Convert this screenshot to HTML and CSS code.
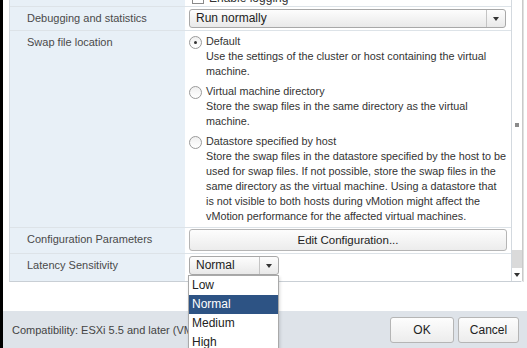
FILE: index.html
```html
<!DOCTYPE html>
<html lang="en">
  <head>
    <meta charset="UTF-8" />
    <meta name="viewport" content="width=device-width, initial-scale=1.0" />
    <title>VM Options</title>
    <link rel="stylesheet" href="styles.css">
  </head>
  <body>
    <div class="dialog">
      <div class="content">
        <div class="scroller">
          <div class="grid">
            <div class="label"></div>
            <div class="value">
              <label class="check"><span class="box"></span>Enable logging</label>
            </div>

            <div class="label">Debugging and statistics</div>
            <div class="value">
              <div class="select wide">
                <span class="select-text">Run normally</span>
                <span class="select-arrow"></span>
              </div>
            </div>

            <div class="label">Swap file location</div>
            <div class="value options">
              <div class="option">
                <span class="radio checked"></span>
                <div class="option-text">
                  <div>Default</div>
                  <div>Use the settings of the cluster or host containing the virtual machine.</div>
                </div>
              </div>
              <div class="option">
                <span class="radio"></span>
                <div class="option-text">
                  <div>Virtual machine directory</div>
                  <div>Store the swap files in the same directory as the virtual machine.</div>
                </div>
              </div>
              <div class="option">
                <span class="radio"></span>
                <div class="option-text">
                  <div>Datastore specified by host</div>
                  <div>Store the swap files in the datastore specified by the host to be used for swap files. If not possible, store the swap files in the same directory as the virtual machine. Using a datastore that<br>is not visible to both hosts during vMotion might affect the vMotion performance for the affected virtual machines.</div>
                </div>
              </div>
            </div>

            <div class="label">Configuration Parameters</div>
            <div class="value tight">
              <button class="btn wide">Edit Configuration...</button>
            </div>

            <div class="label">Latency Sensitivity</div>
            <div class="value">
              <div class="latency">
                <div class="select small">
                  <span class="select-text">Normal</span>
                  <span class="select-arrow"></span>
                </div>
                <ul class="menu">
                  <li>Low</li>
                  <li class="selected">Normal</li>
                  <li>Medium</li>
                  <li>High</li>
                </ul>
              </div>
            </div>
          </div>
          <div class="scrollbar">
            <div class="thumb"><span class="grip"></span></div>
            <div class="track"></div>
            <div class="down"></div>
          </div>
        </div>
        <div class="edge"></div>
      </div>
      <div class="footer">
        <span class="compat">Compatibility: ESXi 5.5 and later (VM version 10)</span>
        <div class="actions">
          <button class="btn action">OK</button>
          <button class="btn action">Cancel</button>
        </div>
      </div>
    </div>
  </body>
</html>
```

FILE: styles.css
```css
body {
  margin: 0;
  background: #fff;
  font-family: "Liberation Sans", Arial, sans-serif;
  font-size: 11px;
  color: #333;
  overflow: hidden;
}

.dialog {
  display: flex;
  flex-direction: column;
  height: 348px;
  border-left: 3px solid #000;
}

.content {
  display: flex;
  height: 311px;
  padding-left: 6px;
  box-sizing: border-box;
  align-items: flex-start;
}

.scroller {
  display: flex;
  width: 512px;
  height: 282px;
  border-left: 1px solid #d3d9df;
  border-bottom: 1px solid #c9cfd5;
  box-sizing: border-box;
  position: relative;
  z-index: 5;
}

.grid {
  flex: 1;
  display: grid;
  grid-template-columns: 175px 1fr;
  grid-template-rows: 22px 24px 197px 26px 27px;
  align-self: flex-start;
  margin-top: -15px;
  border-right: 1px solid #d3d9df;
}

.label {
  background: #e8f0f7;
  padding: 5px 0 0 17px;
  color: #4a4a4a;
  border-bottom: 1px solid #dde3e8;
}

.value {
  padding: 2px 4px;
  border-bottom: 1px solid #dde3e8;
}

.value.tight {
  padding-top: 1px;
}

.grid > :nth-last-child(-n+2) {
  border-bottom: none;
}

.check {
  display: flex;
  align-items: center;
  gap: 5px;
  padding: 4px 0 0 3px;
  font-size: 12px;
}

.check .box {
  width: 10px;
  height: 10px;
  border: 1px solid #8a8a8a;
  background: #fff;
}

.select {
  display: flex;
  height: 19px;
  border: 1px solid #a8a8a8;
  border-radius: 3px;
  background: linear-gradient(#fdfdfd, #e9e9e9);
  box-sizing: border-box;
  color: #222;
}

.select.wide {
  width: 317px;
}

.select.small {
  width: 90px;
}

.select-text {
  flex: 1;
  padding-left: 6px;
  line-height: 17px;
  font-size: 12px;
}

.select-arrow {
  width: 18px;
  border-left: 1px solid #c4c4c4;
  display: flex;
  align-items: center;
  justify-content: center;
}

.select-arrow::before {
  content: "";
  border-left: 3px solid transparent;
  border-right: 3px solid transparent;
  border-top: 4px solid #333;
}

.options {
  display: flex;
  flex-direction: column;
  gap: 5px;
  padding: 3px 0 0 4px;
}

.option {
  display: flex;
  gap: 4px;
}

.option-text {
  flex: none;
  line-height: 15px;
  font-size: 10.8px;
  width: 303px;
}

.radio {
  flex: none;
  width: 11px;
  height: 11px;
  margin-top: 2px;
  border: 1px solid #9a9a9a;
  border-radius: 50%;
  background: linear-gradient(#f0f0f0, #fff);
  display: flex;
  align-items: center;
  justify-content: center;
}

.radio.checked::before {
  content: "";
  width: 3px;
  height: 3px;
  border-radius: 50%;
  background: #333;
}

.btn {
  font-family: inherit;
  font-size: 11.5px;
  color: #222;
  border: 1px solid #b5b5b5;
  border-radius: 3px;
  background: linear-gradient(#fdfdfd, #ececec);
  padding: 0;
}

.btn.wide {
  width: 318px;
  height: 22px;
  display: block;
}

.latency {
  position: relative;
  height: 19px;
}

.menu {
  position: absolute;
  left: -1px;
  top: 19px;
  width: 89px;
  margin: 0;
  padding: 0;
  list-style: none;
  background: #fff;
  border: 1px solid #a9a9a9;
  box-shadow: 1px 2px 3px rgba(0, 0, 0, 0.15);
}

.menu li {
  height: 19px;
  line-height: 19px;
  padding-left: 3px;
  font-size: 12px;
  color: #222;
}

.menu li.selected {
  background: #2d5384;
  color: #fff;
}

.scrollbar {
  flex: none;
  width: 10px;
  height: 281px;
  display: flex;
  flex-direction: column;
  border-right: 1px solid #c9c9c9;
}

.thumb {
  height: 250px;
  background: #fff;
  display: flex;
  align-items: center;
  justify-content: center;
}

.grip {
  width: 4px;
  height: 4px;
  background: radial-gradient(circle, #888 0.7px, transparent 1px) 0 0 / 2px 2px;
}

.track {
  flex: 1;
  background: #dadada;
}

.down {
  height: 13px;
  display: flex;
  align-items: center;
  justify-content: center;
  background: #fff;
}

.down::before {
  content: "";
  border-left: 3px solid transparent;
  border-right: 3px solid transparent;
  border-top: 4px solid #333;
}

.edge {
  width: 2px;
  height: 282px;
  background: #eceff2;
  border-right: 1px solid #e0e0e0;
}

.footer {
  flex: 1;
  display: flex;
  align-items: center;
  justify-content: space-between;
  background: #dee3e9;
  padding: 0 8px 0 9px;
}

.compat {
  color: #444;
  font-size: 11px;
  white-space: nowrap;
}

.actions {
  display: flex;
  gap: 4px;
}

.btn.action {
  height: 26px;
  width: 64px;
  font-size: 12px;
}

.btn.action + .btn.action {
  width: 61px;
}
```
